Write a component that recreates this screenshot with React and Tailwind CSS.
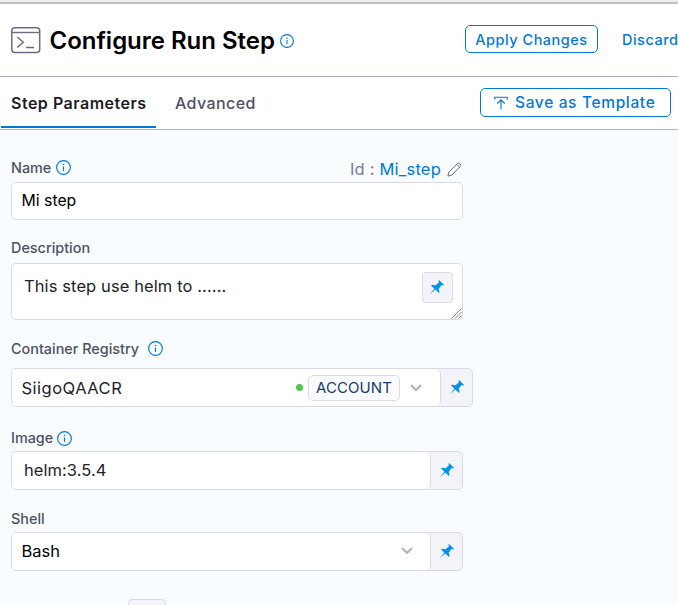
import React from "react";

function InfoIcon({ size = 14, className = "" }) {
  return (
    <svg width={size} height={size} viewBox="0 0 14 14" fill="none" className={`shrink-0 text-[#0278d5] ${className}`}>
      <circle cx="7" cy="7" r="6.4" stroke="currentColor" strokeWidth="1.1" />
      <path d="M7 6v4.2" stroke="currentColor" strokeWidth="1.1" />
      <circle cx="7" cy="4.2" r="0.75" fill="currentColor" />
    </svg>
  );
}

function PinIcon() {
  return (
    <svg width="16" height="16" viewBox="0 0 16 16" className="mr-px mb-px shrink-0 text-[#0092e4]">
      <path
        fill="currentColor"
        d="M10 .9c-.6.5-.5 1.6-.1 2.6L6.1 6.500C4.800 5.600 3 5.300 1.900 6.200l3.500 3.500L.7 15.300l5.700-4.700 3.500 3.500c.9-1.100.6-2.900-.3-4.200L12.500 6.100c1 .4 2.100.5 2.600-.1z"
      />
    </svg>
  );
}

function Chevron() {
  return (
    <svg width="12" height="8" viewBox="0 0 12 8" fill="none" className="shrink-0">
      <path d="M1.5 1.5 6 6l4.5-4.5" stroke="#b0b1c3" strokeWidth="2" strokeLinecap="round" strokeLinejoin="round" />
    </svg>
  );
}

function TerminalIcon() {
  return (
    <svg width="30" height="27" viewBox="0 0 30 27" fill="none" className="shrink-0" stroke="#6b6d85">
      <rect x="0.8" y="0.8" width="27.9" height="24.6" rx="3" strokeWidth="1.5" />
      <path d="M1 5.5h27.5" strokeWidth="1.4" />
      <path d="m6.3 10 6 5.2-6 5.2M15 20.6h8" strokeWidth="1.5" />
    </svg>
  );
}

function Label({ children, className = "" }) {
  return (
    <div className={`flex h-5 items-center text-[14.4px] leading-5 font-medium text-[#4f5162] ${className}`}>{children}</div>
  );
}

function PinnedField({ children, className = "" }) {
  return (
    <div className={`flex h-[39px] overflow-hidden rounded-[5px] border border-[#d9dae5] bg-[#f3f3fa] ${className}`}>
      <div className="flex flex-1 items-center rounded-r-[5px] border-r border-[#d9dae5] bg-white text-[16.5px] text-[#22222a]">
        {children}
      </div>
      <div className="flex w-[31px] items-center justify-center pl-px">
        <PinIcon />
      </div>
    </div>
  );
}

export default function App() {
  return (
    <div className="h-[605px] w-[678px] overflow-hidden bg-[#f8fcff] font-[Inter,sans-serif]">
      <div className="h-1 border-b-2 border-[#bfc0c4] bg-[#f0f0f3]" />
      <header className="flex h-[73px] items-center border-b border-[#b0b1c4] bg-white pl-[11px]">
        <TerminalIcon />
        <h1 className="ml-[8.5px] w-[227.5px] shrink-0 pt-[2px] text-[24px] leading-8 font-semibold tracking-[-0.02px] whitespace-nowrap text-black">
          Configure Run Step
        </h1>
        <InfoIcon className="mt-[2px] ml-[3px]" />
        <button className="mt-[-3px] ml-[171px] h-7 w-[133px] shrink-0 rounded-[5px] border border-[#0278d5] pt-[2px] text-[14.5px] font-medium tracking-[0.5px] whitespace-nowrap text-[#0278d5]">
          Apply Changes
        </button>
        <button className="mt-[-1px] ml-[24px] shrink-0 text-[14.5px] font-medium tracking-[0.5px] text-[#0278d5]">Discard</button>
      </header>
      <nav className="flex h-[53px] items-center border-b border-[#b0b1c4] bg-white text-[16px] font-medium">
        <div className="mt-[-1px] ml-[1px] flex h-[51px] w-[155px] items-center border-b-2 border-[#0278d5] pt-[3px] pl-[10px] font-semibold tracking-[0.5px] whitespace-nowrap text-[#1c1c28]">
          Step Parameters
        </div>
        <div className="ml-[19px] w-[81px] tracking-[0.4px] text-[#4f5162]">Advanced</div>
        <button className="mt-[-1px] ml-[224px] flex h-[29px] w-[191px] shrink-0 items-center rounded-[5px] border border-[#0278d5] pt-[1px] pl-[13px] text-[15.5px] font-medium tracking-[0.65px] whitespace-nowrap text-[#0278d5]">
          <svg width="14" height="14" viewBox="0 0 14 14" fill="none" stroke="currentColor" strokeWidth="1.1" className="mr-[7px] shrink-0">
            <path d="M.8 3.8V1.3h12.4v2.5M7 13.5V4M3.3 7.5 7 3.8l3.7 3.7" />
          </svg>
          Save as Template
        </button>
      </nav>

      <main className="pl-[11px]">
        <div className="flex h-[52px] w-[452px] items-end justify-between pb-[4px]">
          <Label>
            Name
            <InfoIcon size={15} className="mb-[2px] ml-[4.5px]" />
          </Label>
          <div className="flex h-[18px] items-center text-[16.5px] leading-[18px] tracking-[0.2px] text-[#7a7c94]">
            Id :&nbsp;<span className="text-[#0278d5]">Mi_step</span>
            <svg width="15" height="15" viewBox="0 0 15 15" fill="none" stroke="#6b6d85" strokeWidth="1" className="mr-[1px] ml-[6px]">
              <path d="m.9 14.1.9-4L10.6 1.3c.9-.9 3.9 1.4 2.8 3L4.9 13Z" strokeLinejoin="round" />
              <path d="m9.6 2.4 2.8 2.8" />
            </svg>
          </div>
        </div>
        <div className="flex h-[38px] w-[452px] items-center rounded-[5px] border border-[#d9dae5] bg-white pb-[1px] pl-[9.5px] text-[15.8px] text-black">
          Mi step
        </div>

        <Label className="mt-[18px]">Description</Label>
        <div className="relative mt-[5px] flex h-[57px] w-[452px] justify-between rounded-[5px] border border-[#d9dae5] bg-white pt-2 pr-[9px] pl-3">
          <span className="pt-[2px] text-[16.5px] leading-6 tracking-[0.1px] text-[#22222a]">This step use helm to ......</span>
          <div className="flex h-[31px] w-[31px] items-center justify-center rounded-[4px] border border-[#d9dae5] bg-[#f3f3fa]">
            <PinIcon />
          </div>
          <svg width="11" height="11" viewBox="0 0 11 11" className="absolute right-0 bottom-0" stroke="#7d7d84" strokeWidth="1">
            <path d="M.5 10.5l10-10M4 10.5 10.5 4M7.5 10.5l3-3" />
          </svg>
        </div>

        <Label className="mt-[19px]">
          Container Registry
          <InfoIcon size={15} className="mb-[2px] ml-[8.5px]" />
        </Label>
        <PinnedField className="mt-[9px] w-[462px]">
          <span className="flex-1 pt-[2px] pl-[9.5px] tracking-[0.5px]">SiigoQAACR</span>
          <span className="h-[7px] w-[7px] rounded-full bg-[#4dc952]" />
          <span className="ml-[5px] flex h-[26px] w-[92px] items-center justify-center rounded-[5px] border border-[#d9dae5] bg-[#fafbfe] pt-[1px] text-[15px] tracking-[0.1px] text-[#1b3a6b]">
            ACCOUNT
          </span>
          <span className="mr-[18.5px] ml-[9.5px]">
            <Chevron />
          </span>
        </PinnedField>

        <Label className="mt-[21px]">
          Image
          <InfoIcon size={15} className="ml-[4px]" />
        </Label>
        <PinnedField className="mt-[3px] w-[452px]">
          <span className="pl-3 tracking-[0.05px]">helm:3.5.4</span>
        </PinnedField>

        <Label className="mt-[19px]">Shell</Label>
        <PinnedField className="mt-[3px] w-[452px]">
          <span className="flex-1 pl-[9.5px] text-[16.5px] text-black">Bash</span>
          <span className="mr-[17.5px] pb-[2px]">
            <Chevron />
          </span>
        </PinnedField>

        <div className="mt-7 ml-[117px] h-8 w-[38px] rounded-[4px] border border-[#d9dae5] bg-[#f3f3fa]" />
      </main>
    </div>
  );
}
